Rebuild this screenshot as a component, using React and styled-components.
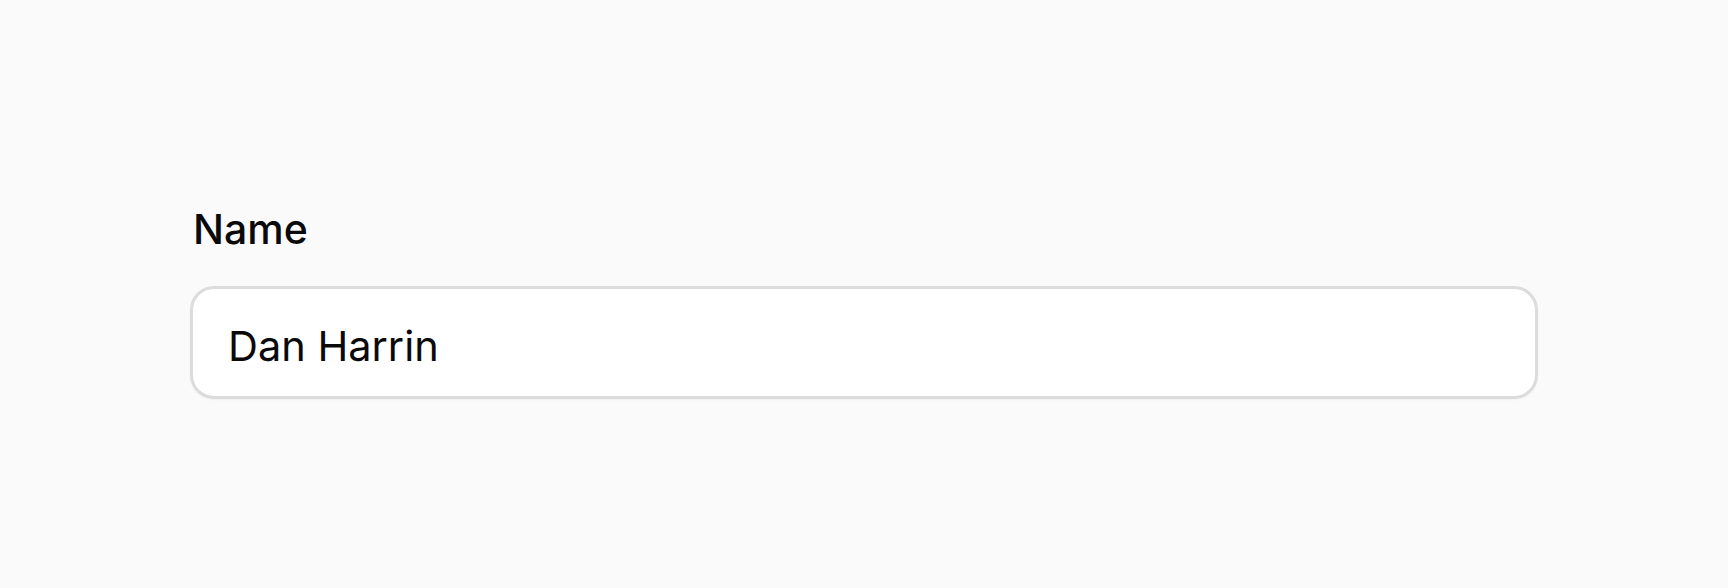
import styled, { createGlobalStyle } from "styled-components";

const GlobalStyle = createGlobalStyle`
  html, body {
    margin: 0;
    padding: 0;
    background: #fafafa;
  }
  body {
    font-family: Inter, "Noto Sans", sans-serif;
    -webkit-font-smoothing: antialiased;
  }
`;

const Page = styled.div`
  width: 1728px;
  height: 588px;
  box-sizing: border-box;
  padding: 201px 190px 0 190px;
  background: #fafafa;
`;

const Field = styled.div`
  display: flex;
  flex-direction: column;
  gap: 29px;
  width: 1348px;
`;

const Label = styled.label`
  font-size: 41px;
  line-height: 56px;
  font-weight: 500;
  color: #0a0a0a;
  padding-left: 3px;
`;

const Input = styled.input`
  box-sizing: border-box;
  width: 100%;
  height: 113px;
  padding: 6px 35px 0;
  border: 3px solid #dcdcdc;
  border-radius: 24px;
  background: #ffffff;
  font-family: Inter, "Noto Sans", sans-serif;
  font-size: 41.5px;
  color: #0a0a0a;
  outline: none;
  box-shadow: 0 1px 2px rgba(0, 0, 0, 0.04);
`;

export default function App() {
  return (
    <>
      <GlobalStyle />
      <Page>
        <Field>
          <Label htmlFor="name">Name</Label>
          <Input id="name" type="text" defaultValue="Dan Harrin" />
        </Field>
      </Page>
    </>
  );
}
